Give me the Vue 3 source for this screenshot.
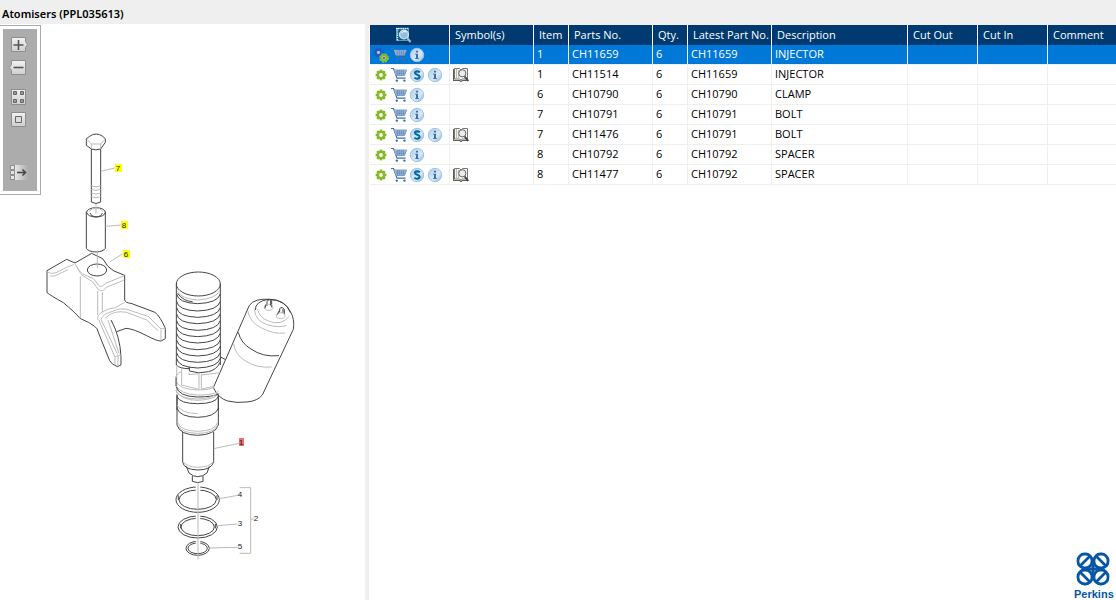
<script setup>
const columns = [
  { key: 'actions', label: '' },
  { key: 'symbols', label: 'Symbol(s)' },
  { key: 'item', label: 'Item' },
  { key: 'part', label: 'Parts No.' },
  { key: 'qty', label: 'Qty.' },
  { key: 'latest', label: 'Latest Part No.' },
  { key: 'description', label: 'Description' },
  { key: 'cutOut', label: 'Cut Out' },
  { key: 'cutIn', label: 'Cut In' },
  { key: 'comment', label: 'Comment' }
]
const fields = ['item', 'part', 'qty', 'latest', 'description', 'cutOut', 'cutIn', 'comment']
const rows = [
  { item: 1, part: 'CH11659', qty: 6, latest: 'CH11659', description: 'INJECTOR', selected: true },
  { item: 1, part: 'CH11514', qty: 6, latest: 'CH11659', description: 'INJECTOR', superseded: true },
  { item: 6, part: 'CH10790', qty: 6, latest: 'CH10790', description: 'CLAMP' },
  { item: 7, part: 'CH10791', qty: 6, latest: 'CH10791', description: 'BOLT' },
  { item: 7, part: 'CH11476', qty: 6, latest: 'CH10791', description: 'BOLT', superseded: true },
  { item: 8, part: 'CH10792', qty: 6, latest: 'CH10792', description: 'SPACER' },
  { item: 8, part: 'CH11477', qty: 6, latest: 'CH10792', description: 'SPACER', superseded: true }
]
const coils = [136, 158, 177, 196, 216, 235, 254, 274, 293, 312, 329]
const teeth = [0, 45, 90, 135, 180, 225, 270, 315]
</script>

<template>
  <div class="page">
    <svg class="defs" aria-hidden="true">
      <defs>
        <linearGradient id="disc" x1="0" y1="0" x2="1" y2="1">
          <stop offset="0" stop-color="#a9cdea" />
          <stop offset=".6" stop-color="#d8e9f6" />
          <stop offset="1" stop-color="#86b3db" />
        </linearGradient>
        <linearGradient id="key" x1="0" y1="0" x2="0" y2="1">
          <stop offset="0" stop-color="#f2f2f2" />
          <stop offset="1" stop-color="#cfcfcf" />
        </linearGradient>
        <linearGradient id="fade" x1="0" y1="0" x2="1" y2="0">
          <stop offset="0" stop-color="#e6e6e6" />
          <stop offset="1" stop-color="#acacac" />
        </linearGradient>
        <symbol id="gear" viewBox="0 0 16 16">
          <rect v-for="a in teeth" :key="a" x="6.7" y="2.6" width="2.6" height="3" fill="#86b928" :transform="`rotate(${a} 8 8)`" />
          <circle cx="8" cy="8" r="3.1" fill="#fff" stroke="#86b928" stroke-width="2.4" />
        </symbol>
        <symbol id="gears" viewBox="0 0 16 16">
          <circle cx="5.5" cy="5.5" r="3" fill="#3f86e6" stroke="#2457c0" stroke-width="2.4" />
          <circle cx="5.5" cy="5.5" r="4.6" fill="none" stroke="#2457c0" stroke-dasharray="2 1.6" />
          <circle cx="5.5" cy="5.5" r="1.4" fill="#a8cff8" />
          <circle cx="11" cy="11" r="2.9" fill="#dbe8a6" stroke="#86b928" stroke-width="2.4" />
          <circle cx="11" cy="11" r="4.4" fill="none" stroke="#9cc943" stroke-dasharray="2 1.5" />
          <circle cx="11" cy="11" r="1.2" fill="#2a82d6" />
        </symbol>
        <symbol id="cart" viewBox="0 0 16 16">
          <path d="M0 1.5h2.5l3.5 9.7h8.5" fill="none" stroke="currentColor" stroke-width="1.2" />
          <path d="M3 3h12.6L13.5 8.6H5z" fill="#b9cce4" />
          <path d="M3 3h12.6L13.5 8.6H5M3.7 5h11M4.5 6.8h9.8M6.3 3v5.6M8.3 3v5.6M10.3 3v5.6M12.3 3v5.6" fill="none" stroke="#5780b5" stroke-width=".7" />
          <circle cx="5.8" cy="13.6" r="1.2" fill="currentColor" />
          <circle cx="13.4" cy="13.6" r="1.2" fill="currentColor" />
        </symbol>
        <symbol id="info" viewBox="0 0 16 16">
          <circle cx="8" cy="8" r="6.7" fill="url(#disc)" stroke="#9fc4e4" />
          <path d="M7 3.7h2v1.8H7zM6 6.7h3v4.5h1V12H6v-.8h1V7.5H6z" fill="#426fa9" />
        </symbol>
        <symbol id="superseded" viewBox="0 0 16 16">
          <circle cx="8" cy="8" r="6.7" fill="url(#disc)" stroke="#9fc4e4" />
          <path d="M10.8 5.2C9.5 4.1 6 3.9 6 6s4.6 1.6 4.6 3.8c0 2.3-3.7 2.3-5.2 1" fill="none" stroke="#08699f" stroke-width="2.1" />
        </symbol>
        <symbol id="book" viewBox="0 0 16 16">
          <path d="M1.5 1.5h5L8 3l1.5-1.5h5V12H9.5L8 13l-1.5-1h-5z" fill="#f5f5f2" stroke="#77776f" />
          <path d="M.6 2v11.5h6L8 14.5l1.5-1h5.8" fill="none" stroke="#5f5f57" stroke-width="1.2" />
          <path d="M3.5 2v9.5M5.5 3v8" stroke="#b9b9b3" />
          <circle cx="9.3" cy="6.3" r="3.6" fill="#e9edee" stroke="#666" />
          <path d="M11.7 9.5l3.5 4.5" stroke="#444" stroke-width="2" />
        </symbol>
      </defs>
    </svg>

    <header class="title">Atomisers (PPL035613)</header>

    <main class="workspace">
      <section class="drawing">
        <nav class="tools" aria-label="Drawing tools">
          <button type="button" aria-label="Zoom in">
            <svg viewBox="0 0 20 18"><path d="M2.5 1.5h14v4l2 3-2 3v4h-14z" fill="url(#key)" stroke="#8d8d8d" /><path d="M9.5 4v10M4.5 9h10" stroke="#555" stroke-width="1.6" /></svg>
          </button>
          <button type="button" aria-label="Zoom out">
            <svg viewBox="0 0 20 18"><path d="M2.5 1.5h14v14h-14v-4l-2-3 2-3z" fill="url(#key)" stroke="#8d8d8d" /><path d="M4.5 8.5h10" stroke="#555" stroke-width="1.6" /></svg>
          </button>
          <button type="button" class="spaced" aria-label="Show thumbnails">
            <svg viewBox="0 0 20 18"><path d="M2.5 1.5h14v15h-14z" fill="url(#key)" stroke="#8d8d8d" /><path d="M4.5 3.5h3v3h-3zM11.5 3.5h3v3h-3zM4.5 11.5h3v3h-3zM11.5 11.5h3v3h-3z" fill="#999" stroke="#666" /></svg>
          </button>
          <button type="button" aria-label="Fit to window">
            <svg viewBox="0 0 20 18"><path d="M2.5 1.5h14v14h-14z" fill="url(#key)" stroke="#8d8d8d" /><path d="M6.5 5.5h6v6h-6z" fill="#ddd" stroke="#666" /></svg>
          </button>
          <button type="button" class="last" aria-label="Hide panel">
            <svg viewBox="0 0 20 18"><path d="M6 1h13v15H6z" fill="url(#fade)" /><path d="M1.5 1.5h4v4h-4zM1.5 6.5h4v4h-4zM1.5 11.5h4v4h-4z" fill="#e6e6e6" stroke="#8d8d8d" /><path d="M8 8.5h8M13.5 5.5l3 3-3 3" fill="none" stroke="#444" stroke-width="1.5" /></svg>
          </button>
        </nav>

        <svg class="diagram" viewBox="0 25 365 575" role="img" aria-label="Exploded view of injector parts">
          <g transform="translate(40 125) scale(.33333)" class="ink">
            <path d="M139 50V41L149 34Q168 20 188 34L196 41V52L182 72Q168 77 154 72L139 61zM154 72V231Q168 240 182 231V72M139 260V370Q145 380 168 381Q190 380 196 370V260" />
            <ellipse cx="168" cy="262" rx="28" ry="14" />
            <path d="M150 264Q153 275 168 276Q184 275 187 264" />
            <path class="soft" d="M141 43L154 57L182 57L195 43M154 57V72M182 57V72M154 182Q168 189 182 182M154 193Q168 200 182 193M154 204Q168 211 182 204M154 215Q168 222 182 215M168 238V266M148 260Q153 249 168 249Q183 249 188 260M182 139L228 128M196 304L244 300M209 411L248 386" />
          </g>

          <g transform="translate(40 240) scale(.33333)" class="ink">
            <path d="M21 92L80 58L105 69L155 40L188 56Q202 83 222 93L254 106V180Q257 189 273 190L345 217Q361 230 376 265V296L363 303Q352 304 318 286Q279 266 258 265L230 275M21 92V158Q31 166 70 188Q104 216 120 235Q150 248 164 259Q173 264 176 280L209 362Q214 373 232 380L243 375V350Q240 288 213 240" />
            <ellipse cx="171" cy="90" rx="29" ry="18" />
            <path class="soft" d="M21 95Q34 105 48 98L80 82L101 74M30 108Q45 111 57 102L84 89M105 72Q118 96 128 102L160 116L179 139Q187 141 199 129L251 108M111 80Q122 106 132 109L158 126L176 150Q186 158 201 141L251 121M121 109V235M173 153V225M187 157V216M173 239Q172 224 186 217Q201 205 226 203L254 187M182 240Q190 221 212 216Q236 203 258 207L326 230L363 267L376 264M363 269V301M195 235Q220 209 260 217L320 240L354 272M176 239L225 351M184 240L233 344M204 240L237 340M224 351L243 344M225 352V376M234 348V378M172 32V84" />
          </g>

          <g transform="translate(165 260) scale(.33333)" class="ink">
            <ellipse cx="100" cy="72" rx="66" ry="36" />
            <path d="M34 72V315M166 72V315" />
            <path v-for="y in coils" :key="y" :d="`M35 ${y - 34}Q39 ${y - 7} 98 ${y - 5}Q158 ${y - 7} 166 ${y - 34}`" />
            <path d="M38 100Q55 124 83 125M73 320V333Q100 343 130 335Q155 330 165 307M34 315Q44 326 73 326M165 290L180 298" />
            <path d="M253 136L145 383Q160 415 188 423Q215 430 246 426Q278 423 292 405L385 208Q390 178 376 154Q355 118 316 118Q269 114 253 136zM220 217Q228 250 258 267Q293 292 342 287M271 150Q270 124 311 118Q365 120 376 158" />
            <path class="soft" d="M38 95Q51 117 98 120Q154 116 164 92M248 152Q255 189 292 205Q326 223 360 219M268 148Q272 184 307 194Q344 205 365 196M278 148Q282 172 310 183Q349 199 373 169M206 251Q210 285 243 304Q276 325 320 321M35 320V400M50 325V376M72 338V344L102 341V388L49 375M109 342V387L147 379M32 351Q40 335 50 335M166 338L110 345M34 365Q40 387 97 390Q135 390 147 381M33 377Q45 402 97 405Q135 406 155 397M35 396Q55 421 97 421Q144 420 163 400" />
            <path d="M33 352V378M34 380Q40 409 97 411Q142 411 160 402M36 404V450M160 404V450" />
            <path d="M306 138V124Q312 115 320 122V142M344 158V146Q352 138 358 149V163" />
            <ellipse class="soft" cx="311" cy="142" rx="13" ry="9" />
            <ellipse class="soft" cx="347" cy="167" rx="13" ry="9" />
            <path d="M303 133L300 145M342 153L337 164M317 122V137M354 147V158" />
          </g>

          <g transform="translate(165 390) scale(.33333)" class="ink">
            <path d="M36 14V105Q45 135 98 136Q151 134 160 105V14M36 20Q45 41 98 41Q151 41 160 20M36 55Q45 81 98 82Q150 81 160 55M53 126V216Q57 239 98 240Q139 240 146 216V126M64 229L72 249Q85 260 98 260Q114 260 126 249L133 229M82 258V274Q98 282 114 274V258" />
            <path class="soft" d="M32 0Q40 26 98 27Q151 26 160 2M37 46Q48 70 98 71M37 96Q46 123 98 124Q151 123 159 96M40 108Q53 130 98 130Q143 130 157 108M55 215Q64 231 98 232Q134 231 145 215" />
            <ellipse cx="98" cy="329" rx="65" ry="38" /><ellipse cx="98" cy="329" rx="56" ry="29" />
            <ellipse cx="98" cy="411" rx="59" ry="33" /><ellipse cx="98" cy="411" rx="50" ry="26" />
            <ellipse cx="98" cy="475" rx="35" ry="21" /><ellipse cx="98" cy="475" rx="29" ry="16" />
            <path class="gap" d="M92 295H106M92 380H106M92 456H106" />
            <path class="soft" d="M99 281V508M146 176L222 160M163 326L219 316M158 407L218 402M133 474L219 472M224 293H257V490H224M257 387H268" />
            <path d="M40 316V330M156 316V330M47 402V415M151 402V415" />
          </g>

          <g class="callouts">
            <rect x="115" y="164" width="7" height="8" class="mark" /><text x="118" y="171">7</text>
            <rect x="121" y="221" width="7" height="8" class="mark" /><text x="124" y="228">8</text>
            <rect x="123" y="250" width="7" height="8" class="mark" /><text x="126" y="257">6</text>
            <rect x="239" y="438" width="5" height="8" class="active" /><text x="241" y="445">1</text>
            <text x="240" y="497">4</text><text x="240" y="526">3</text><text x="240" y="549">5</text><text x="256" y="521">2</text>
          </g>
        </svg>
      </section>

      <section class="parts">
        <table>
          <colgroup><col v-for="c in columns" :key="c.key" :class="c.key" /></colgroup>
          <thead>
            <tr>
              <th v-for="c in columns" :key="c.key" scope="col">
                <span v-if="c.label">{{ c.label }}</span>
                <button v-else class="search" type="button" aria-label="Search parts">
                  <svg viewBox="0 0 20 18">
                    <path d="M2.5 2.5h12v12h-12z" fill="#0d588c" stroke="#4f9cc9" />
                    <path d="M2 2.5h13M3.5 2v13" stroke="#d7edf3" stroke-width="1.4" stroke-dasharray="1.4 .8" />
                    <circle cx="10" cy="8.5" r="4.4" fill="#8fc0dc" stroke="#d9e2e5" stroke-width="1.4" />
                    <path d="M7.5 7q2-2.5 5-1" fill="none" stroke="#fff" />
                    <path d="M13.2 12l3.3 4" stroke="#9fb4c6" stroke-width="2.2" />
                  </svg>
                </button>
              </th>
            </tr>
          </thead>
          <tbody>
            <tr v-for="r in rows" :key="r.part" :class="{ selected: r.selected }">
              <td>
                <div class="icons">
                  <button type="button" aria-label="Options"><svg><use :href="r.selected ? '#gears' : '#gear'" /></svg></button>
                  <button type="button" aria-label="Add to cart"><svg><use href="#cart" /></svg></button>
                  <button v-if="r.superseded" type="button" aria-label="Supersession"><svg><use href="#superseded" /></svg></button>
                  <button type="button" aria-label="Information"><svg><use href="#info" /></svg></button>
                </div>
              </td>
              <td>
                <div class="icons">
                  <button v-if="r.superseded" type="button" aria-label="View history"><svg><use href="#book" /></svg></button>
                </div>
              </td>
              <td v-for="f in fields" :key="f">{{ r[f] }}</td>
            </tr>
          </tbody>
        </table>
        <div class="logo">
          <svg viewBox="0 0 34 34" aria-hidden="true">
            <g fill="none" stroke="#0557a4" stroke-width="2.8">
              <rect x="2" y="2" width="14" height="14" rx="6.5" /><rect x="18" y="2" width="14" height="14" rx="6.5" />
              <rect x="2" y="18" width="14" height="14" rx="6.5" /><rect x="18" y="18" width="14" height="14" rx="6.5" />
              <path d="M4 14L14 4M20 4L30 14M4 20L14 30M20 30L30 20M17 9V25M9 17H25" />
            </g>
          </svg>
          <span>Perkins</span>
        </div>
      </section>
    </main>
  </div>
</template>

<style scoped>
.page {
  display: grid;
  grid-template-rows: 24px 1fr;
  min-height: 100vh;
  background: #fff;
  color: #000;
  font: 11px/17px "Open Sans", "Noto Sans", sans-serif;
}
.defs { position: absolute; width: 0; height: 0; }
button { margin: 0; padding: 0; border: 0; background: none; color: inherit; cursor: pointer; }
.title { padding: 4px 2px 0; background: #efefef; font-family: "Noto Sans", "Open Sans", sans-serif; font-size: 11px; font-weight: 600; line-height: 20px; }
.workspace { display: grid; grid-template-columns: 365px 1fr; }
.drawing { position: relative; border-right: 4px solid #efefef; margin-right: -4px; }
.diagram { display: block; width: 365px; margin-top: 1px; }
.ink { fill: none; stroke: #444; stroke-width: 3; stroke-linejoin: round; }
.soft { stroke: #bbb; stroke-width: 3; }
.gap { stroke: #fff; stroke-width: 16; }
.callouts { font: 8px "Liberation Sans", sans-serif; text-anchor: middle; fill: #222; }
.mark { fill: #ff0; }
.active { fill: #f36d6d; }
.tools {
  position: absolute;
  z-index: 1;
  top: 1px;
  left: 0;
  box-sizing: border-box;
  display: flex;
  flex-direction: column;
  gap: 5px;
  width: 41px;
  height: 170px;
  padding: 10px 0 0 9px;
  border: 1px solid #aaa;
  border-left: 0;
  background: #acacac;
  box-shadow: inset 0 0 0 3px #fff;
}
.tools button { width: 20px; height: 18px; }
.tools svg { display: block; width: 20px; height: 18px; }
.tools .spaced { margin-top: 6px; }
.tools .last { margin-top: 30px; }
.parts {
  display: flex;
  flex-direction: column;
  justify-content: space-between;
  min-width: 0;
  padding-left: 5px;
  border-top: 1px solid #efefef;
}
table { width: 100%; table-layout: fixed; border-collapse: separate; border-spacing: 0; }
.actions { width: 80px; }
.symbols, .part, .latest { width: 84px; }
.item, .qty { width: 35px; }
.description { width: 136px; }
.cutOut, .cutIn { width: 70px; }
th, td { box-sizing: border-box; padding: 0 0 2px 3px; border-right: 1px solid #efefef; font-weight: 400; text-align: left; white-space: nowrap; }
th { height: 20px; padding-left: 5px; background: #003a70; color: #fff; border-color: #fff; }
td { height: 20px; border-bottom: 1px solid #efefef; }
th:last-child, td:last-child { border-right: 0; }
th:first-child { padding: 0 0 0 24px; }
td:first-child, td:nth-child(2) { padding-bottom: 0; }
.selected td { background: #0078d7; color: #fff; }
.icons { display: flex; gap: 2px; height: 18px; align-items: center; color: #426fab; }
.icons button, .icons svg { display: block; width: 16px; height: 16px; }
.search, .search svg { display: block; width: 20px; height: 18px; }
.logo { align-self: flex-end; width: 38px; margin-right: 4px; text-align: center; color: #0557a4; font: bold 11px/12px "Liberation Sans", sans-serif; }
.logo svg { display: block; width: 34px; height: 34px; margin: 0 auto 2px; }
</style>

<style>
body { margin: 0; }
</style>
